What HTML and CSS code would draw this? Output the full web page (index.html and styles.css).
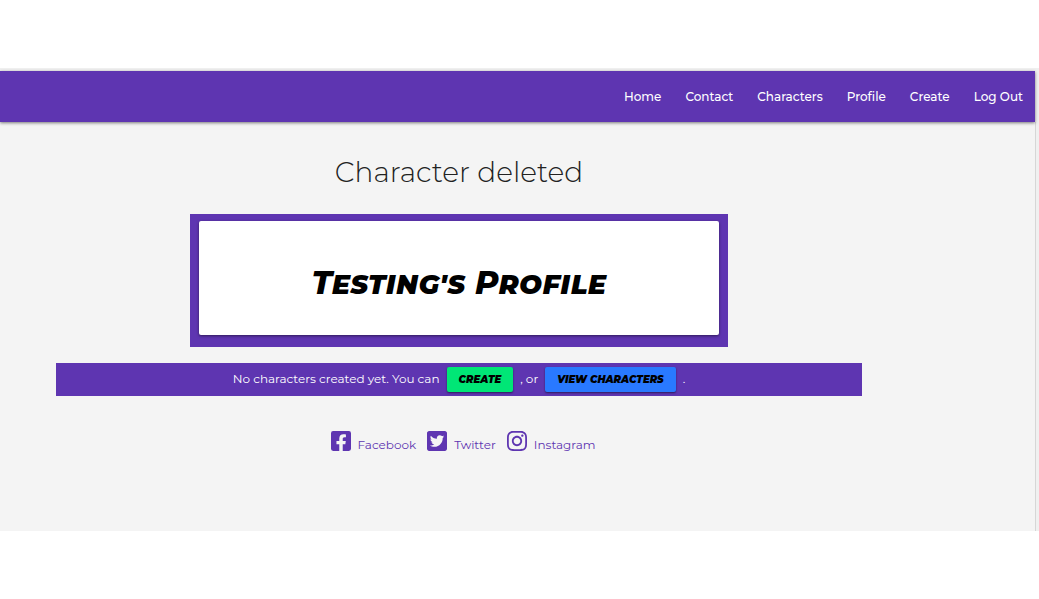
FILE: index.html
```html
<!DOCTYPE html>
<html lang="en">
<head>
<meta charset="utf-8">
<meta name="viewport" content="width=device-width, initial-scale=1">
<title>Testing's Profile</title>
<link rel="stylesheet" href="styles.css">
</head>
<body>
<div class="frame">
  <header class="header">
    <nav class="nav">
      <a href="#">Home</a>
      <a href="#">Contact</a>
      <a href="#">Characters</a>
      <a href="#">Profile</a>
      <a href="#">Create</a>
      <a href="#">Log Out</a>
    </nav>
  </header>
  <div class="content">
    <main class="main">
      <h2 class="message">Character deleted</h2>
      <section class="panel">
        <div class="card"><h1 class="title">Testing's Profile</h1></div>
      </section>
      <section class="notice">
        <span>No characters created yet. You can</span>
        <a class="btn btn-create" href="#">create</a>
        <span>, or</span>
        <a class="btn btn-view" href="#">view characters</a>
        <span>.</span>
      </section>
    </main>
    <footer class="social">
      <a href="#"><svg class="icon" viewBox="0 32 448 448" aria-hidden="true"><path d="M400 32H48A48 48 0 0 0 0 80v352a48 48 0 0 0 48 48h137.25V327.69h-63V256h63v-54.64c0-62.15 37-96.48 93.67-96.48 27.14 0 55.52 4.84 55.52 4.84v61h-31.27c-30.81 0-40.42 19.12-40.42 38.73V256h68.78l-11 71.69h-57.78V480H400a48 48 0 0 0 48-48V80a48 48 0 0 0-48-48z"/></svg><span>Facebook</span></a>
      <a href="#"><svg class="icon" viewBox="0 32 448 448" aria-hidden="true"><path d="M400 32H48C21.5 32 0 53.5 0 80v352c0 26.500 21.500 48 48 48h352c26.500 0 48-21.500 48-48V80c0-26.500-21.500-48-48-48zm-48.900 158.800c.2 2.800.2 5.700.2 8.500 0 86.700-66 186.600-186.600 186.600-37.200 0-71.700-10.800-100.700-29.400 5.300.6 10.400.8 15.800.8 30.700 0 58.900-10.400 81.400-28-28.800-.6-53-19.500-61.300-45.500 10.100 1.500 19.200 1.500 29.600-1.200-30-6.100-52.500-32.500-52.500-64.400v-.8c8.700 4.900 18.900 7.900 29.600 8.300a65.447 65.447 0 0 1-29.200-54.600c0-12.200 3.200-23.400 8.900-33.100 32.300 39.800 80.800 65.800 135.200 68.600-9.300-44.500 24-80.600 64-80.600 18.900 0 35.900 7.900 47.900 20.700 14.800-2.800 29-8.300 41.600-15.800-4.900 15.200-15.200 28-28.800 36.100 13.200-1.400 26-5.100 37.800-10.200-8.900 13.100-20.100 24.700-32.900 34z"/></svg><span>Twitter</span></a>
      <a href="#"><svg class="icon" viewBox="0 32 448 448" aria-hidden="true"><path d="M224.100 141c-63.600 0-114.900 51.300-114.900 114.900s51.300 114.900 114.900 114.900S339 319.500 339 255.900 287.700 141 224.100 141zm0 189.600c-41.100 0-74.700-33.500-74.700-74.700s33.500-74.700 74.700-74.700 74.700 33.500 74.700 74.700-33.600 74.700-74.700 74.700zm146.400-194.300c0 14.900-12 26.800-26.800 26.800-14.900 0-26.800-12-26.800-26.800s12-26.800 26.800-26.800 26.800 12 26.800 26.800zm76.100 27.200c-1.700-35.900-9.900-67.700-36.200-93.900-26.200-26.200-58-34.400-93.900-36.200-37-2.100-147.900-2.100-184.900 0-35.800 1.700-67.600 9.900-93.900 36.100s-34.400 58-36.200 93.900c-2.100 37-2.100 147.900 0 184.900 1.700 35.900 9.900 67.700 36.200 93.900s58 34.400 93.900 36.200c37 2.100 147.900 2.100 184.900 0 35.900-1.700 67.700-9.900 93.900-36.200 26.200-26.200 34.400-58 36.200-93.900 2.100-37 2.100-147.800 0-184.800zM398.800 388c-7.800 19.600-22.900 34.700-42.600 42.600-29.500 11.700-99.500 9-132.100 9s-102.700 2.600-132.100-9c-19.600-7.800-34.700-22.900-42.600-42.600-11.700-29.500-9-99.500-9-132.100s-2.600-102.700 9-132.100c7.800-19.600 22.900-34.700 42.600-42.600 29.500-11.700 99.500-9 132.100-9s102.700-2.600 132.100 9c19.600 7.800 34.700 22.900 42.600 42.600 11.700 29.500 9 99.500 9 132.100s2.700 102.700-9 132.100z"/></svg><span>Instagram</span></a>
    </footer>
  </div>
</div>
</body>
</html>
```
FILE: styles.css
```css
* { box-sizing: border-box; }
body {
  margin: 0;
  padding: 68px 0;
  background: #fff;
  font-family: Montserrat, Inter, sans-serif;
  font-size: 12px;
}
a { text-decoration: none; color: inherit; }
.frame {
  padding-top: 3px;
  padding-right: 3px;
  background: #f0f0f0;
}
.header {
  position: relative;
  margin-right: 1px;
  background: #5e35b1;
  box-shadow: 0 1px 3px rgba(0, 0, 0, .5);
}
.nav {
  display: flex;
  justify-content: flex-end;
  color: #fff;
  font-weight: 500;
  line-height: 51px;
}
.nav a { padding: 0 12px; }
.content {
  padding: 32px 173px 75px 56px;
  background: #f4f4f4;
  border-right: 1px solid #d6d6d6;
}
.main {
  display: flex;
  flex-direction: column;
  align-items: center;
}
.message {
  margin: 0 0 24px;
  font-size: 28px;
  font-weight: 300;
  line-height: 36px;
  color: #222;
}
.panel {
  width: 66.7%;
  padding: 7px 9px 12px;
  background: #5e35b1;
}
.card {
  padding: 38px 16px 28px;
  border-radius: 2px;
  background: #fff;
  box-shadow: 0 1px 3px rgba(0, 0, 0, .5);
  text-align: center;
}
.title {
  margin: 0;
  font-family: "Permanent Marker", Montserrat, sans-serif;
  font-size: 32px;
  font-style: italic;
  font-weight: 800;
  font-variant: small-caps;
  line-height: 48px;
  color: #000;
}
.notice {
  display: flex;
  justify-content: center;
  gap: 7px;
  width: 100%;
  margin-top: 16px;
  padding: 4px 0;
  background: #5e35b1;
  color: #fff;
  line-height: 24px;
}
.btn {
  padding: 0 12px;
  border-radius: 2px;
  box-shadow: 0 1px 2px rgba(0, 0, 0, .5);
  font-family: "Permanent Marker", Montserrat, sans-serif;
  font-size: 10px;
  font-style: italic;
  font-weight: 900;
  text-transform: uppercase;
  line-height: 25px;
  color: #000;
}
.btn-create { background: #00e676; }
.btn-view { background: #2979ff; }
.social {
  display: flex;
  justify-content: center;
  gap: 11px;
  margin-top: 35px;
  padding-left: 8px;
  color: #5e35b1;
}
.social a { display: flex; gap: 7px; line-height: 22px; }
.social span { padding-top: 3px; }
.icon { width: 20px; height: 20px; fill: currentColor; }
```
